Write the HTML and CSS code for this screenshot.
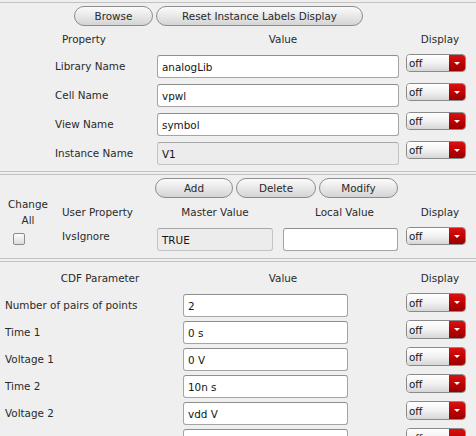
FILE: index.html
```html
<!DOCTYPE html>
<html>
<head>
<meta charset="utf-8">
<link rel="stylesheet" href="styles.css">
</head>
<body>
<div class="panel">
  <section class="frame f1">
    <div class="btnrow b1">
      <div class="btn w-browse">Browse</div>
      <div class="btn w-reset">Reset Instance Labels Display</div>
    </div>
    <div class="hdr h1">
      <span class="h1-prop">Property</span>
      <span class="h1-val">Value</span>
      <span class="hdisp">Display</span>
    </div>
    <div class="row r1">
      <span class="lbl">Library Name</span>
      <div class="field">analogLib</div>
      <div class="sel"><span class="sel-txt">off</span><span class="sel-btn"><i class="tri"></i></span></div>
    </div>
    <div class="row r1">
      <span class="lbl">Cell Name</span>
      <div class="field">vpwl</div>
      <div class="sel"><span class="sel-txt">off</span><span class="sel-btn"><i class="tri"></i></span></div>
    </div>
    <div class="row r1">
      <span class="lbl">View Name</span>
      <div class="field">symbol</div>
      <div class="sel"><span class="sel-txt">off</span><span class="sel-btn"><i class="tri"></i></span></div>
    </div>
    <div class="row r1">
      <span class="lbl">Instance Name</span>
      <div class="field disabled">V1</div>
      <div class="sel"><span class="sel-txt">off</span><span class="sel-btn"><i class="tri"></i></span></div>
    </div>
  </section>

  <section class="frame f2">
    <div class="btnrow b2">
      <div class="btn w-add">Add</div>
      <div class="btn w-del">Delete</div>
      <div class="btn w-mod">Modify</div>
    </div>
    <div class="hdr h2">
      <span class="h2-chg">Change<br>All</span>
      <span class="h2-user">User Property</span>
      <span class="h2-master">Master Value</span>
      <span class="h2-local">Local Value</span>
      <span class="hdisp">Display</span>
    </div>
    <div class="row r2">
      <span class="chk-cell"><span class="chk"></span></span>
      <span class="lbl">IvsIgnore</span>
      <div class="field disabled">TRUE</div>
      <div class="field"></div>
      <div class="sel"><span class="sel-txt">off</span><span class="sel-btn"><i class="tri"></i></span></div>
    </div>
  </section>

  <section class="frame f3">
    <div class="hdr h3">
      <span class="h3-cdf">CDF Parameter</span>
      <span class="h3-val">Value</span>
      <span class="hdisp">Display</span>
    </div>
    <div class="row r3">
      <span class="lbl">Number of pairs of points</span>
      <div class="field">2</div>
      <div class="sel"><span class="sel-txt">off</span><span class="sel-btn"><i class="tri"></i></span></div>
    </div>
    <div class="row r3">
      <span class="lbl">Time 1</span>
      <div class="field">0 s</div>
      <div class="sel"><span class="sel-txt">off</span><span class="sel-btn"><i class="tri"></i></span></div>
    </div>
    <div class="row r3">
      <span class="lbl">Voltage 1</span>
      <div class="field">0 V</div>
      <div class="sel"><span class="sel-txt">off</span><span class="sel-btn"><i class="tri"></i></span></div>
    </div>
    <div class="row r3">
      <span class="lbl">Time 2</span>
      <div class="field">10n s</div>
      <div class="sel"><span class="sel-txt">off</span><span class="sel-btn"><i class="tri"></i></span></div>
    </div>
    <div class="row r3">
      <span class="lbl">Voltage 2</span>
      <div class="field">vdd V</div>
      <div class="sel"><span class="sel-txt">off</span><span class="sel-btn"><i class="tri"></i></span></div>
    </div>
    <div class="row r3">
      <span class="lbl"></span>
      <div class="field"></div>
      <div class="sel"><span class="sel-txt">off</span><span class="sel-btn"><i class="tri"></i></span></div>
    </div>
  </section>
</div>
</body>
</html>
```

FILE: styles.css
```css
html, body {
  margin: 0;
  padding: 0;
  background: #efefef;
}
body {
  width: 476px;
  height: 436px;
  overflow: hidden;
  font-family: "DejaVu Sans", sans-serif;
  font-size: 10.4px;
  color: #2a2a2a;
}
.panel {
  display: flex;
  flex-direction: column;
}
.frame {
  border-top: 1px solid #c2c2c2;
  border-bottom: 1px solid #c2c2c2;
  margin-top: 2px;
}
.f1 { padding-bottom: 3px; }
.f2 { padding-bottom: 4px; }
.f3 { border-bottom: none; }

/* buttons */
.btnrow {
  display: flex;
  gap: 3px;
  margin-top: 3px;
  height: 20px;
}
.b1 { padding-left: 74px; }
.b2 { padding-left: 155px; }
.btn {
  box-sizing: border-box;
  height: 20px;
  border: 1px solid #8c8c8c;
  border-radius: 10px;
  background: linear-gradient(#fbfbfb, #e6e6e6 55%, #d4d4d4);
  display: flex;
  align-items: center;
  justify-content: center;
  color: #2a2a2a;
}
.w-browse { width: 79px; }
.w-reset { width: 207px; }
.w-add { width: 78px; }
.w-del { width: 80px; }
.w-mod { width: 79px; }

/* headers */
.hdr {
  display: flex;
  align-items: center;
}
.hdr span { text-align: center; }
.hdisp { width: 68px; margin-left: 8px; }
.h1 { height: 25px; padding-bottom: 1px; }
.h1-prop { width: 168px; }
.h1-val { width: 230px; }

.h2 { height: 28px; }
.h2-chg { width: 56px; line-height: 16px; }
.h2 .h2-user { width: 95px; padding-left: 6px; text-align: left; }
.h2-master { width: 116px; }
.h2-local { width: 123px; margin-left: 10px; }
.h2 .hdisp { margin-left: 0; }

.h3 { height: 26px; padding-top: 3px; }
.h3-cdf { width: 200px; }
.h3-val { width: 166px; }
.h3 .hdisp { margin-left: 40px; }

/* rows */
.row {
  display: flex;
  align-items: flex-start;
}
.lbl {
  display: flex;
  align-items: center;
  box-sizing: border-box;
}
.field {
  box-sizing: border-box;
  height: 23px;
  background: #fff;
  border: 1px solid #a4a4a4;
  border-top-color: #8e8e8e;
  border-radius: 3px;
  display: flex;
  align-items: center;
  padding-left: 4px;
  color: #151515;
}
.field.disabled {
  background: #ececec;
  border-color: #c4c4c4;
  border-top-color: #a8a8a8;
}
.sel {
  box-sizing: border-box;
  width: 60px;
  height: 18px;
  display: flex;
  border-radius: 4px;
  border: 1px solid #8a8a8a;
  overflow: hidden;
}
.sel-txt {
  flex: 1;
  background: linear-gradient(#ffffff, #f2f2f2 50%, #d6d6d6);
  display: flex;
  align-items: center;
  padding-left: 2px;
  color: #151515;
}
.sel-btn {
  width: 16px;
  background: linear-gradient(#dc1010, #b80000 60%, #9a0000);
  display: flex;
  align-items: center;
  justify-content: center;
}
.tri {
  width: 0;
  height: 0;
  border-left: 3px solid transparent;
  border-right: 3px solid transparent;
  border-top: 3px solid #fff;
}

.r1 { height: 29px; }
.r1 .lbl { width: 157px; padding-left: 55px; height: 28px; }
.r1 .field { width: 242px; margin-top: 3px; }
.r1 .sel { margin-top: 2px; margin-left: 7px; }

.r2 { height: 28px; }
.chk-cell { width: 62px; height: 28px; display: flex; align-items: flex-start; }
.chk {
  box-sizing: border-box;
  width: 12px;
  height: 12px;
  margin-top: 7px;
  margin-left: 13px;
  border: 1px solid #8a8a8a;
  border-radius: 2px;
  background: linear-gradient(#fdfdfd, #dcdcdc);
}
.r2 .lbl { width: 95px; height: 20px; }
.r2 .field { margin-top: 2px; }
.r2 .field.disabled { width: 116px; }
.r2 .field:not(.disabled) { width: 115px; margin-left: 10px; }
.r2 .sel { margin-top: 1px; margin-left: 8px; }

.r3 { height: 27px; flex-shrink: 0; }
.r3 .lbl { width: 183px; padding-left: 5px; height: 27px; }
.r3 .field { width: 165px; margin-top: 3px; }
.r3 .sel { height: 19px; margin-top: 2px; margin-left: 58px; }
```
